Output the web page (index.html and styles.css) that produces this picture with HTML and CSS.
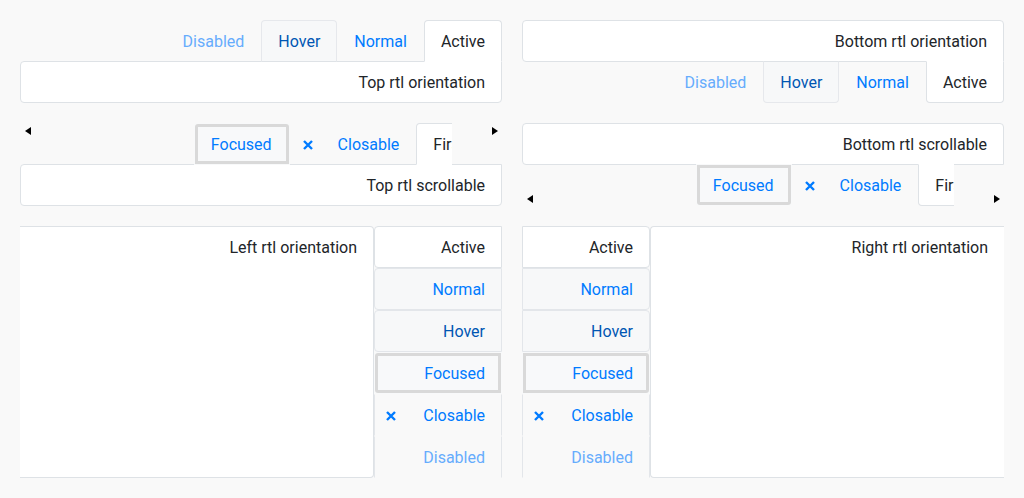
FILE: index.html
```html
<!DOCTYPE html>
<html lang="en">
<head>
<meta charset="utf-8">
<title>RTL tabs</title>
<link rel="stylesheet" href="styles.css">
</head>
<body>
<div class="page">

  <section class="demo demo-top">
    <ul class="tabs tabs-top">
      <li class="tab active">Active</li>
      <li class="tab">Normal</li>
      <li class="tab hover">Hover</li>
      <li class="tab disabled">Disabled</li>
    </ul>
    <div class="panel">Top rtl orientation</div>
  </section>

  <section class="demo demo-bottom">
    <div class="panel">Bottom rtl orientation</div>
    <ul class="tabs tabs-bottom">
      <li class="tab active">Active</li>
      <li class="tab">Normal</li>
      <li class="tab hover">Hover</li>
      <li class="tab disabled">Disabled</li>
    </ul>
  </section>

  <section class="demo demo-top">
    <div class="scroller scroller-top">
      <span class="arrow arrow-left"></span>
      <div class="viewport">
        <ul class="tabs strip">
          <li class="tab active">First</li>
          <li class="tab closable"><span>Closable</span><svg class="x" viewBox="0 0 10 10" width="10" height="10"><path d="M1 1 L9 9 M9 1 L1 9"/></svg></li>
          <li class="tab focused">Focused</li>
        </ul>
      </div>
      <span class="arrow arrow-right"></span>
    </div>
    <div class="panel">Top rtl scrollable</div>
  </section>

  <section class="demo demo-bottom">
    <div class="panel">Bottom rtl scrollable</div>
    <div class="scroller scroller-bottom">
      <span class="arrow arrow-left"></span>
      <div class="viewport">
        <ul class="tabs strip">
          <li class="tab active">First</li>
          <li class="tab closable"><span>Closable</span><svg class="x" viewBox="0 0 10 10" width="10" height="10"><path d="M1 1 L9 9 M9 1 L1 9"/></svg></li>
          <li class="tab focused">Focused</li>
        </ul>
      </div>
      <span class="arrow arrow-right"></span>
    </div>
  </section>

  <section class="demo vdemo vdemo-left">
    <ul class="vtabs">
      <li class="vtab active">Active</li>
      <li class="vtab boxed">Normal</li>
      <li class="vtab boxed hover">Hover</li>
      <li class="vtab focused">Focused</li>
      <li class="vtab plain closable"><span>Closable</span><svg class="x" viewBox="0 0 10 10" width="10" height="10"><path d="M1 1 L9 9 M9 1 L1 9"/></svg></li>
      <li class="vtab plain disabled">Disabled</li>
    </ul>
    <div class="vpanel">Left rtl orientation</div>
  </section>

  <section class="demo vdemo vdemo-right">
    <div class="vpanel">Right rtl orientation</div>
    <ul class="vtabs">
      <li class="vtab active">Active</li>
      <li class="vtab boxed">Normal</li>
      <li class="vtab boxed hover">Hover</li>
      <li class="vtab focused">Focused</li>
      <li class="vtab plain closable"><span>Closable</span><svg class="x" viewBox="0 0 10 10" width="10" height="10"><path d="M1 1 L9 9 M9 1 L1 9"/></svg></li>
      <li class="vtab plain disabled">Disabled</li>
    </ul>
  </section>

</div>
</body>
</html>
```
FILE: styles.css
```css
* {
  box-sizing: border-box;
  margin: 0;
  padding: 0;
}

html,
body {
  background: #f9f9f9;
}

body {
  font-family: Roboto, "Liberation Sans", sans-serif;
  font-size: 16px;
  line-height: 24px;
  color: #212529;
}

.page {
  display: grid;
  grid-template-columns: 482px 482px;
  grid-template-rows: 83px 83px 252px;
  gap: 20px;
  padding: 20px;
}

.demo {
  direction: rtl;
}

/* ---------- horizontal tabs ---------- */

.tabs {
  display: flex;
  list-style: none;
}

.tab {
  display: flex;
  align-items: center;
  height: 42px;
  padding: 9px 16px 7px;
  border: 1px solid transparent;
  color: #007bff;
  white-space: nowrap;
}

.tabs-top .tab {
  margin-bottom: -1px;
  border-radius: 4px 4px 0 0;
}

.tabs-bottom .tab {
  margin-top: -1px;
  border-radius: 0 0 4px 4px;
}

.tab.active {
  position: relative;
  z-index: 1;
  color: #212529;
  background: #fff;
  border-color: #dee2e6;
}

.tabs-top .tab.active,
.scroller-top .tab.active {
  border-bottom-color: #fff;
}

.tabs-bottom .tab.active,
.scroller-bottom .tab.active {
  border-top-color: #fff;
}

.tab.hover {
  color: #0056b3;
  background: #f7f8f9;
  border-color: #e6e8ec;
}

.tabs-top .tab.hover {
  border-bottom-color: #dee2e6;
}

.tabs-bottom .tab.hover {
  border-top-color: #dee2e6;
}

.tab.disabled,
.vtab.disabled {
  color: #66acfd;
}

.tab.focused,
.vtab.focused {
  background: #f8f9fa;
  box-shadow: inset 0 0 0 3px #d9d9d9;
}

.tab.focused {
  padding-left: 16px;
  padding-right: 17px;
}

.closable {
  gap: 25px;
  padding-left: 12px;
}

.x {
  flex: none;
  fill: none;
  stroke: #007bff;
  stroke-width: 2.4;
}

/* ---------- panels ---------- */

.panel {
  height: 42px;
  padding: 9px 16px 7px;
  background: #fff;
  border: 1px solid #dee2e6;
  border-radius: 4px;
}

.demo-top .panel {
  border-top-right-radius: 0;
}

.demo-bottom .panel {
  border-bottom-right-radius: 0;
}

/* ---------- scrollable ---------- */

.scroller {
  direction: ltr;
  display: flex;
  height: 41px;
}

.scroller-top {
  align-items: flex-start;
}

.scroller-bottom {
  align-items: flex-end;
}

.viewport {
  direction: rtl;
  position: relative;
  z-index: 1;
  flex: 1;
  height: 42px;
  overflow: hidden;
}

.scroller-top .viewport {
  margin-bottom: -1px;
  align-self: flex-start;
}

.scroller-bottom .viewport {
  margin-top: -1px;
  align-self: flex-end;
}

.strip {
  margin-right: -30px;
}

.scroller-top .strip .tab {
  border-radius: 4px 4px 0 0;
}

.scroller-bottom .strip .tab {
  border-radius: 0 0 4px 4px;
}

.arrow {
  flex: none;
  display: flex;
  height: 15px;
  align-items: center;
}

.arrow-left {
  width: 16px;
  padding-left: 5px;
}

.arrow-right {
  width: 50px;
  justify-content: flex-end;
  padding-right: 4px;
}

.arrow-left::before,
.arrow-right::before {
  content: "";
  border-top: 4px solid transparent;
  border-bottom: 4px solid transparent;
}

.arrow-left::before {
  border-right: 6px solid #000;
}

.arrow-right::before {
  border-left: 6px solid #000;
}

/* ---------- vertical ---------- */

.vdemo {
  display: flex;
}

.vtabs {
  flex: none;
  width: 128px;
  list-style: none;
  display: flex;
  flex-direction: column;
}

.vtab {
  display: flex;
  align-items: center;
  height: 42px;
  padding: 9px 16px 7px;
  border: 1px solid transparent;
  color: #007bff;
  white-space: nowrap;
}

.vtab.active {
  color: #212529;
  background: #fff;
  border-color: #dee2e6;
}

.vtab.boxed {
  background: #f7f8f9;
  border-color: #e3e6ea;
}

.vtab.hover {
  color: #0056b3;
}

.vtab.plain {
  border-left-color: #e3e6ea;
  border-right-color: #e3e6ea;
}

.vtab.closable {
  justify-content: space-between;
  padding-left: 11px;
}

.vdemo-left .vtab {
  border-radius: 4px 0 0 4px;
}

.vdemo-right .vtab {
  border-radius: 0 4px 4px 0;
}

.vtab.plain {
  border-radius: 0;
}

.vpanel {
  flex: 1;
  padding: 9px 16px 7px;
  background: #fff;
  border: 1px solid #dee2e6;
}

.vdemo-left .vpanel {
  border-left: none;
  border-radius: 0 4px 4px 0;
}

.vdemo-right .vpanel {
  border-right: none;
  border-radius: 4px 0 0 4px;
}
```
